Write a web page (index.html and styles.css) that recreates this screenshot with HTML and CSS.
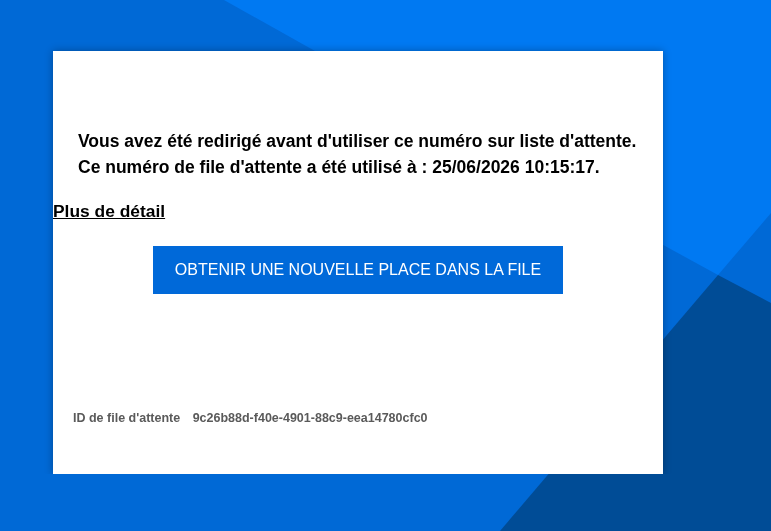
FILE: index.html
```html
<!DOCTYPE html>
<html>
<head>
    <title>File d'attente</title>
    <meta name="viewport" content="width=device-width, initial-scale=1">
    <link rel="stylesheet" href="styles.css">
</head>
<body>

<!-- Background shapes -->
<svg class="backdrop" viewBox="0 0 771 531" preserveAspectRatio="none">
    <rect x="0" y="0" width="771" height="531" fill="#0069d6"/>
    <polygon points="224,0 771,0 771,213 718,275 541,178" fill="#0079f2"/>
    <polygon points="718,275 771,303 771,531 500,531" fill="#004c96"/>
</svg>

<!-- Queue card -->
<div class="card">
    <div class="message">
        <p>Vous avez été redirigé avant d'utiliser ce numéro sur liste d'attente.</p>
        <p>Ce numéro de file d'attente a été utilisé à : 25/06/2026 10:15:17.</p>
    </div>

    <a class="details" href="#">Plus de détail</a>

    <div class="actions">
        <a class="btn" href="#">Obtenir une nouvelle place dans la file</a>
    </div>

    <div class="footer">
        <span class="label">ID de file d'attente</span>
        <span class="queue-id">9c26b88d-f40e-4901-88c9-eea14780cfc0</span>
    </div>
</div>

</body>
</html>
```

FILE: styles.css
```css
/* Page */
body {
    margin: 0;
    font-family: "Liberation Sans", Arial, sans-serif;
    color: #000;
}

.backdrop {
    position: fixed;
    top: 0;
    left: 0;
    width: 100vw;
    height: 100vh;
    z-index: -1;
}

/* Card */
.card {
    position: relative;
    width: 610px;
    height: 423px;
    margin: 51px 0 0 53px;
    background-color: #fff;
    box-shadow: 0 0 8px rgba(0, 0, 0, 0.3);
    display: flex;
    flex-direction: column;
}

/* Message */
.message {
    padding: 77px 25px 0;
}

.message p {
    margin: 0;
    font-size: 17.5px;
    font-weight: bold;
    line-height: 26px;
}

.details {
    align-self: flex-start;
    margin-top: 21px;
    font-size: 17.4px;
    font-weight: bold;
    color: #000;
    text-decoration: underline;
}

/* Button */
.actions {
    display: flex;
    justify-content: center;
    margin-top: 24px;
}

.btn {
    display: block;
    padding: 0 22px;
    line-height: 48px;
    font-size: 16px;
    color: #fff;
    background-color: #0069d9;
    text-decoration: none;
    text-transform: uppercase;
}

/* Footer */
.footer {
    margin-top: auto;
    padding: 0 20px 49px;
    font-size: 12.5px;
    font-weight: bold;
    line-height: 14px;
    color: #5a5a5a;
}

.footer .label {
    margin-right: 9px;
}
```
